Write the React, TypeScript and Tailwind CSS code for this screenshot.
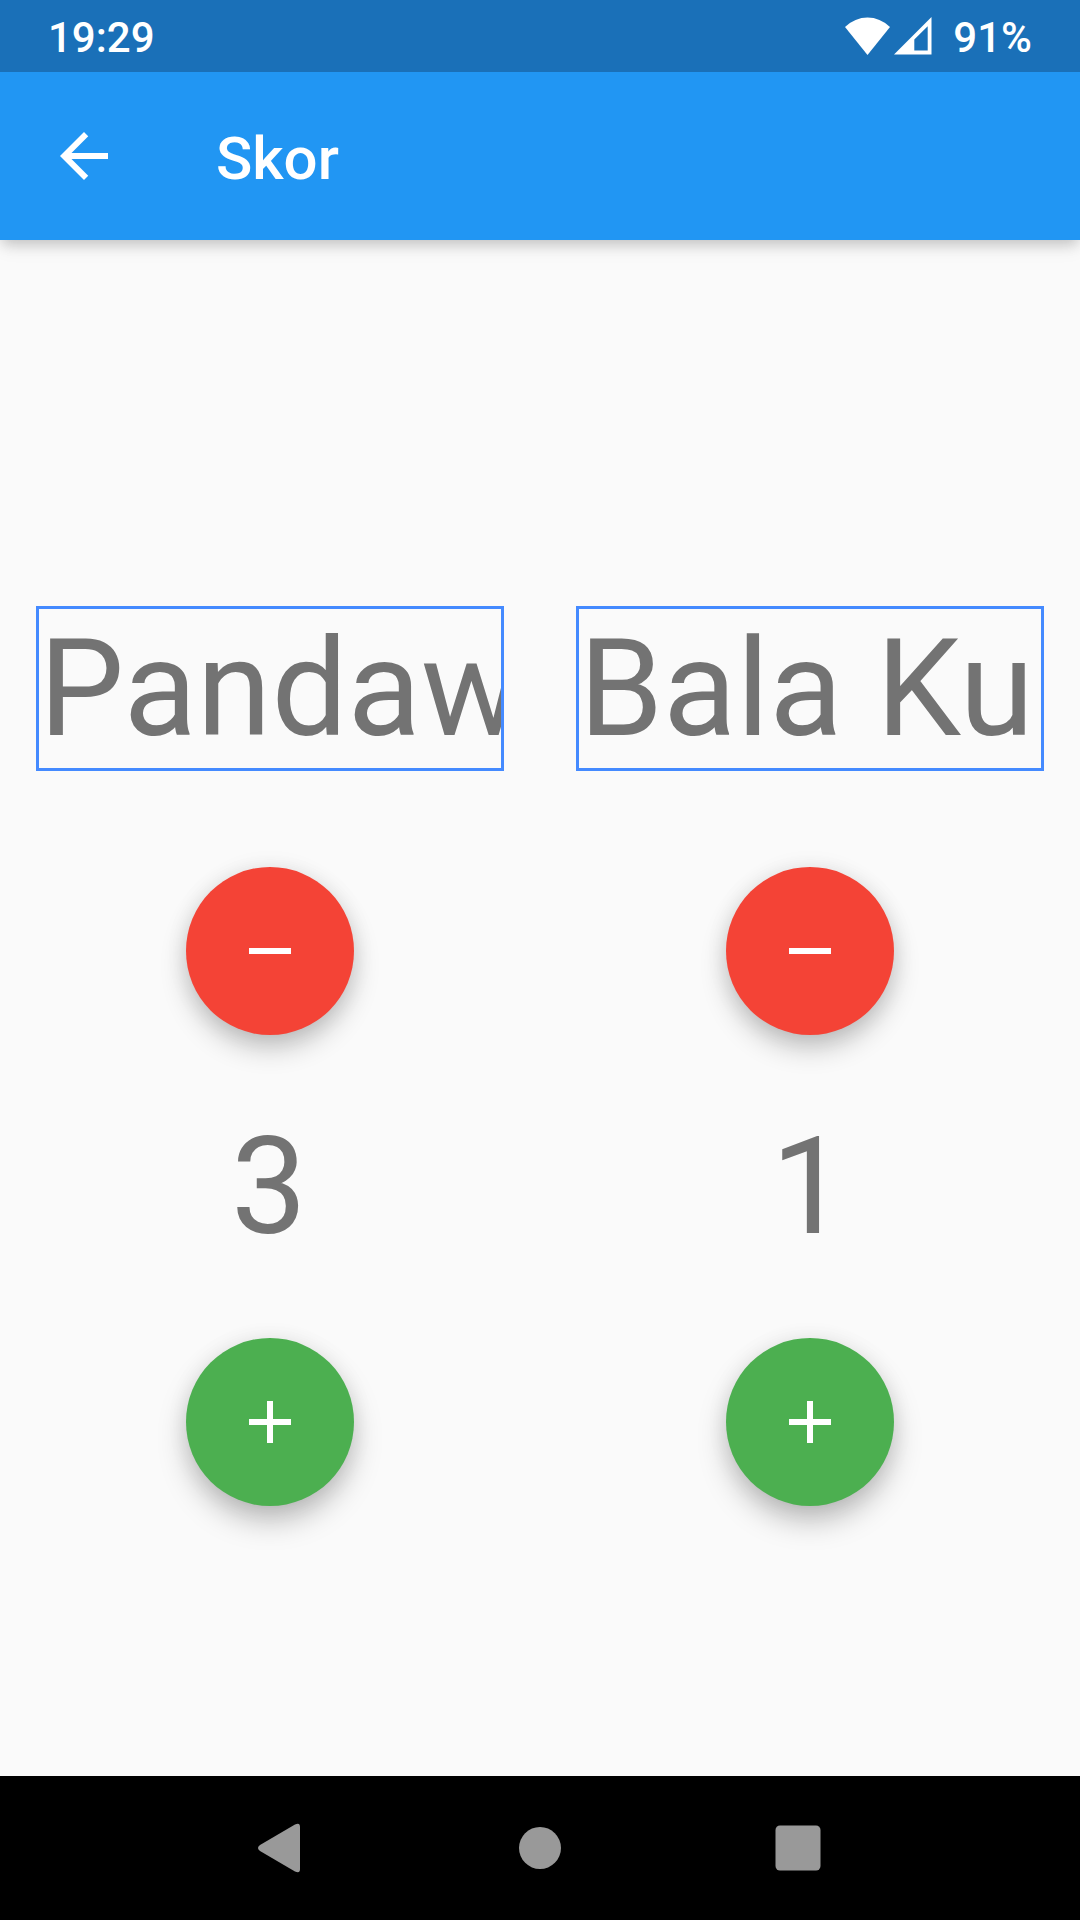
type TeamProps = { name: string; score: number };

function ScoreButton({ kind }: { kind: "minus" | "plus" }) {
  const minus = kind === "minus";
  return (
    <button
      aria-label={minus ? "Kurangi" : "Tambah"}
      className={
        minus
          ? "flex size-[168px] items-center justify-center rounded-full bg-[#f44336] shadow-[0_14px_28px_-2px_rgba(0,0,0,0.24),0_1px_22px_0_rgba(0,0,0,0.08)]"
          : "flex size-[168px] items-center justify-center rounded-full bg-[#4caf50] shadow-[0_16px_30px_-2px_rgba(0,0,0,0.26),0_1px_22px_0_rgba(0,0,0,0.07)]"
      }
    >
      <svg viewBox="0 0 24 24" className="size-[72px] fill-white">
        <path d={minus ? "M19 13H5v-2h14v2z" : "M19 13h-6v6h-2v-6H5v-2h6V5h2v6h6v2z"} />
      </svg>
    </button>
  );
}

function Team({ name, score }: TeamProps) {
  return (
    <section className="flex min-w-0 flex-1 flex-col items-center px-9 text-[135px] leading-[157px] text-[#737373]">
      <div className="w-full overflow-hidden border-[3px] border-[#448aff] pt-[2px] whitespace-nowrap">{name}</div>
      <div className="mt-24">
        <ScoreButton kind="minus" />
      </div>
      <div className="my-[72px] pt-[2px] pr-[2px]">{score}</div>
      <ScoreButton kind="plus" />
    </section>
  );
}

export default function App() {
  return (
    <div className="flex h-[1920px] w-[1080px] flex-col overflow-hidden bg-[#fafafa] font-[Roboto,sans-serif]">
      <header className="relative shadow-[0_6px_12px_-2px_rgba(0,0,0,0.15),0_8px_18px_-2px_rgba(0,0,0,0.1)]">
        <div className="flex h-[72px] items-center bg-[#1a70b8] pr-[48px] pl-[48px] text-[42px] font-medium text-white">
          <span className="pt-[3px]">19:29</span>
          <svg viewBox="0 0 45 38" className="-mt-px mr-1 ml-auto h-[38px] w-[45px] fill-white">
            <path d="M0 10Q10 .5 22.5 .5T45 10L22.5 38Z" />
          </svg>
          <svg viewBox="0 0 38 38" className="mr-[21px] h-[38px] w-[38px] fill-white">
            <path fillRule="evenodd" d="M0 37.5L37.5 0V37.5ZM20.3 22.5V33.5H33.7V9.2Z" />
          </svg>
          <span className="pt-[3px]">91%</span>
        </div>
        <div className="flex h-[168px] items-center bg-[#2196f3] pl-12 text-white">
          <svg viewBox="0 0 24 24" className="size-[72px] fill-white">
            <path d="M20 11H7.83l5.59-5.59L12 4l-8 8 8 8 1.41-1.41L7.83 13H20v-2z" />
          </svg>
          <h1 className="ml-24 pt-[6px] text-[60px] leading-[70px] font-medium">Skor</h1>
        </div>
      </header>
      <main className="flex flex-1 items-start pt-[366px]">
        <Team name="Pandawa" score={3} />
        <Team name="Bala Kurawa" score={1} />
      </main>
      <nav className="flex h-36 items-center bg-black pl-[257px]">
        <svg viewBox="0 0 44 50" className="h-[50px] w-[44px] fill-[#999]">
          <path d="M3 22L38 1.5Q43 -1 43 4V46Q43 51 38 48.5L3 28Q-1 25 3 22Z" />
        </svg>
        <div className="ml-[218px] size-[42px] rounded-full bg-[#999]" />
        <svg viewBox="0 0 46 46" className="ml-[214px] size-[46px] fill-[#999]">
          <rect x="0.5" y="0.5" width="45" height="45" rx="4.5" />
        </svg>
      </nav>
    </div>
  );
}
